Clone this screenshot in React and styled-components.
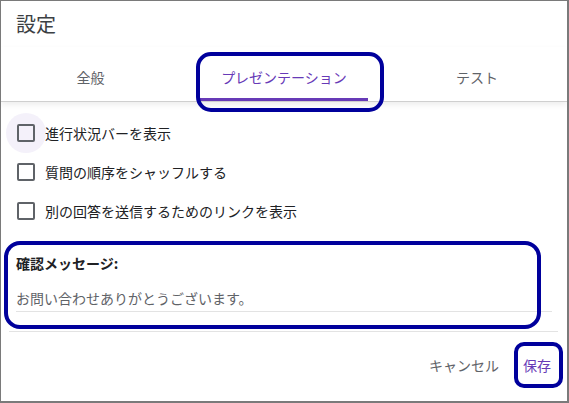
import React from "react";
import styled, { createGlobalStyle } from "styled-components";

const GlobalStyle = createGlobalStyle`
  html, body { margin: 0; padding: 0; background: #ffffff; }
  body { font-family: "Noto Sans CJK JP", "Noto Sans", sans-serif; }
  * { box-sizing: border-box; }
`;

const PURPLE = "#673ab7";
const NAVY = "#00009c";

const Dialog = styled.div`
  position: relative;
  width: 569px;
  height: 403px;
  border: 1px solid #7a7a7a;
  border-right-width: 2px;
  border-bottom-width: 2px;
  background: #ffffff;
  display: flex;
  flex-direction: column;
  overflow: hidden;
`;

const Header = styled.div`
  height: 46px;
  display: flex;
  align-items: center;
  padding-left: 15px;
`;

const Title = styled.h1`
  margin: 0;
  font-size: 20px;
  font-weight: 400;
  line-height: 24px;
  color: #3c4043;
`;

const TabBar = styled.div`
  position: relative;
  z-index: 1;
  display: grid;
  grid-template-columns: 179px 168px 178px;
  column-gap: 20px;
  border-bottom: 1px solid #cfcfcf;
  box-shadow: 0 3px 6px rgba(0, 0, 0, 0.07);
`;

const Tab = styled.div`
  height: 54px;
  padding-top: 6px;
  display: flex;
  align-items: center;
  justify-content: center;
  font-size: 14px;
  line-height: 20px;
  color: ${(p) => (p.$active ? PURPLE : "#5f6368")};
  box-shadow: ${(p) => (p.$active ? `inset 0 -3px 0 ${PURPLE}` : "none")};
`;

const Content = styled.div`
  display: flex;
  flex-direction: column;
  padding-top: 11px;
`;

const OptionRow = styled.label`
  position: relative;
  z-index: 0;
  height: 39px;
  display: flex;
  align-items: center;
  gap: 10px;
  padding-left: 16px;
  font-size: 14px;
  line-height: 20px;
  color: #202124;
`;

const Box = styled.span`
  position: relative;
  width: 18px;
  height: 18px;
  flex: none;
  border: 2px solid #5f6368;
  border-radius: 2px;
  &::before {
    content: "";
    display: ${(p) => (p.$hover ? "block" : "none")};
    position: absolute;
    left: 50%;
    top: 50%;
    width: 40px;
    height: 40px;
    margin: -20px 0 0 -20px;
    border-radius: 50%;
    background: rgba(103, 58, 183, 0.07);
    z-index: -1;
  }
`;

const Confirm = styled.div`
  margin-top: 23px;
  padding: 0 0 0 15px;
  display: flex;
  flex-direction: column;
`;

const ConfirmLabel = styled.div`
  font-size: 14px;
  line-height: 20px;
  font-weight: 700;
  color: #202124;
`;

const ConfirmInput = styled.div`
  margin-top: 15px;
  width: 536px;
  padding-bottom: 3px;
  border-bottom: 1px solid #e3e3e3;
  font-size: 14px;
  line-height: 20px;
  color: #5f6368;
`;

const Divider = styled.div`
  margin: 19px 0 0 8px;
  width: 549px;
  height: 1px;
  background: #e3e3e3;
`;

const Footer = styled.div`
  display: flex;
  justify-content: flex-end;
  gap: 8px;
  padding: 15px 8px 0 0;
`;

const Button = styled.button`
  height: 36px;
  padding: 0 8px;
  border: none;
  background: transparent;
  font-family: inherit;
  font-size: 14px;
  line-height: 20px;
  color: ${(p) => (p.$primary ? PURPLE : "#5f6368")};
  cursor: pointer;
`;

const Annotation = styled.div`
  position: absolute;
  left: ${(p) => p.$x}px;
  top: ${(p) => p.$y}px;
  width: ${(p) => p.$w}px;
  height: ${(p) => p.$h}px;
  border: 4.5px solid ${NAVY};
  border-radius: ${(p) => p.$r}px;
  pointer-events: none;
  z-index: 5;
`;

const options = [
  "進行状況バーを表示",
  "質問の順序をシャッフルする",
  "別の回答を送信するためのリンクを表示",
];

export default function App() {
  return (
    <>
      <GlobalStyle />
      <Dialog>
        <Header>
          <Title>設定</Title>
        </Header>
        <TabBar>
          <Tab>全般</Tab>
          <Tab $active>プレゼンテーション</Tab>
          <Tab>テスト</Tab>
        </TabBar>
        <Content>
          {options.map((o, i) => (
            <OptionRow key={o}>
              <Box $hover={i === 0} />
              {o}
            </OptionRow>
          ))}
          <Confirm>
            <ConfirmLabel>確認メッセージ:</ConfirmLabel>
            <ConfirmInput>お問い合わせありがとうございます。</ConfirmInput>
          </Confirm>
          <Divider />
          <Footer>
            <Button>キャンセル</Button>
            <Button $primary>保存</Button>
          </Footer>
        </Content>
        <Annotation $x={195} $y={51} $w={188} $h={60} $r={15} />
        <Annotation $x={3} $y={240} $w={537} $h={88} $r={16} />
        <Annotation $x={513} $y={341} $w={49} $h={46} $r={10} />
      </Dialog>
    </>
  );
}
